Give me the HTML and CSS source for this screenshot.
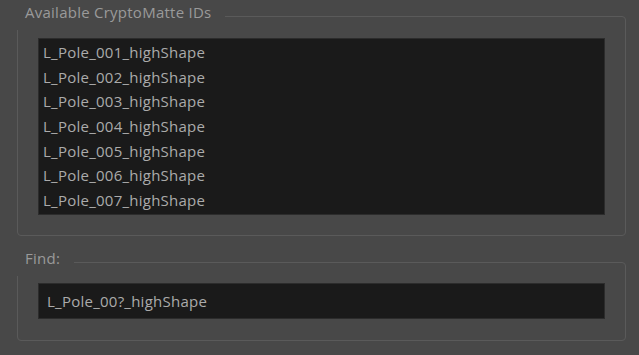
FILE: index.html
```html
<!DOCTYPE html>
<html lang="en">
<head>
    <meta charset="UTF-8">
    <meta name="viewport" content="width=device-width, initial-scale=1.0">
    <title>CryptoMatte</title>
    <link rel="stylesheet" href="styles.css">
</head>
<body>
    <fieldset class="group">
        <legend>Available CryptoMatte IDs</legend>
        <ul class="id-list">
            <li>L_Pole_001_highShape</li>
            <li>L_Pole_002_highShape</li>
            <li>L_Pole_003_highShape</li>
            <li>L_Pole_004_highShape</li>
            <li>L_Pole_005_highShape</li>
            <li>L_Pole_006_highShape</li>
            <li>L_Pole_007_highShape</li>
        </ul>
    </fieldset>
    <fieldset class="group find-group">
        <legend>Find:</legend>
        <input type="text" class="find-input" value="L_Pole_00?_highShape">
    </fieldset>
</body>
</html>
```

FILE: styles.css
```css
body {
    font-family: "Open Sans", "Noto Sans", sans-serif;
    font-size: 15px;
    letter-spacing: 0.25px;
    background-color: #484848;
    margin: 0;
    padding: 2px 0 0 0;
}
.group {
    margin: 0 13px 0 17px;
    padding: 8px 20px 20px 20px;
    border: 1px solid #5a5a5a;
    border-radius: 4px;
}
.group legend {
    margin-left: -21px;
    padding: 0 14px 8px 8px;
    line-height: 20px;
    color: #9a9a9a;
    background: linear-gradient(#484848, #484848) no-repeat top left / 100% 20px;
}
.id-list {
    list-style: none;
    margin: 0;
    padding: 1px 4px 3px 4px;
    height: 171px;
    background-color: #1a1a1a;
    border: 1px solid #2c2c2c;
    color: #ababab;
}
.id-list li {
    line-height: 24.67px;
}
.find-group {
    margin-top: 12px;
    padding-top: 7px;
    padding-bottom: 21px;
}
.find-input {
    display: block;
    width: 100%;
    height: 36px;
    box-sizing: border-box;
    padding: 0 8px;
    font-family: inherit;
    font-size: 15px;
    letter-spacing: 0.25px;
    color: #ababab;
    background-color: #1a1a1a;
    border: 1px solid #2c2c2c;
    outline: none;
}
```
